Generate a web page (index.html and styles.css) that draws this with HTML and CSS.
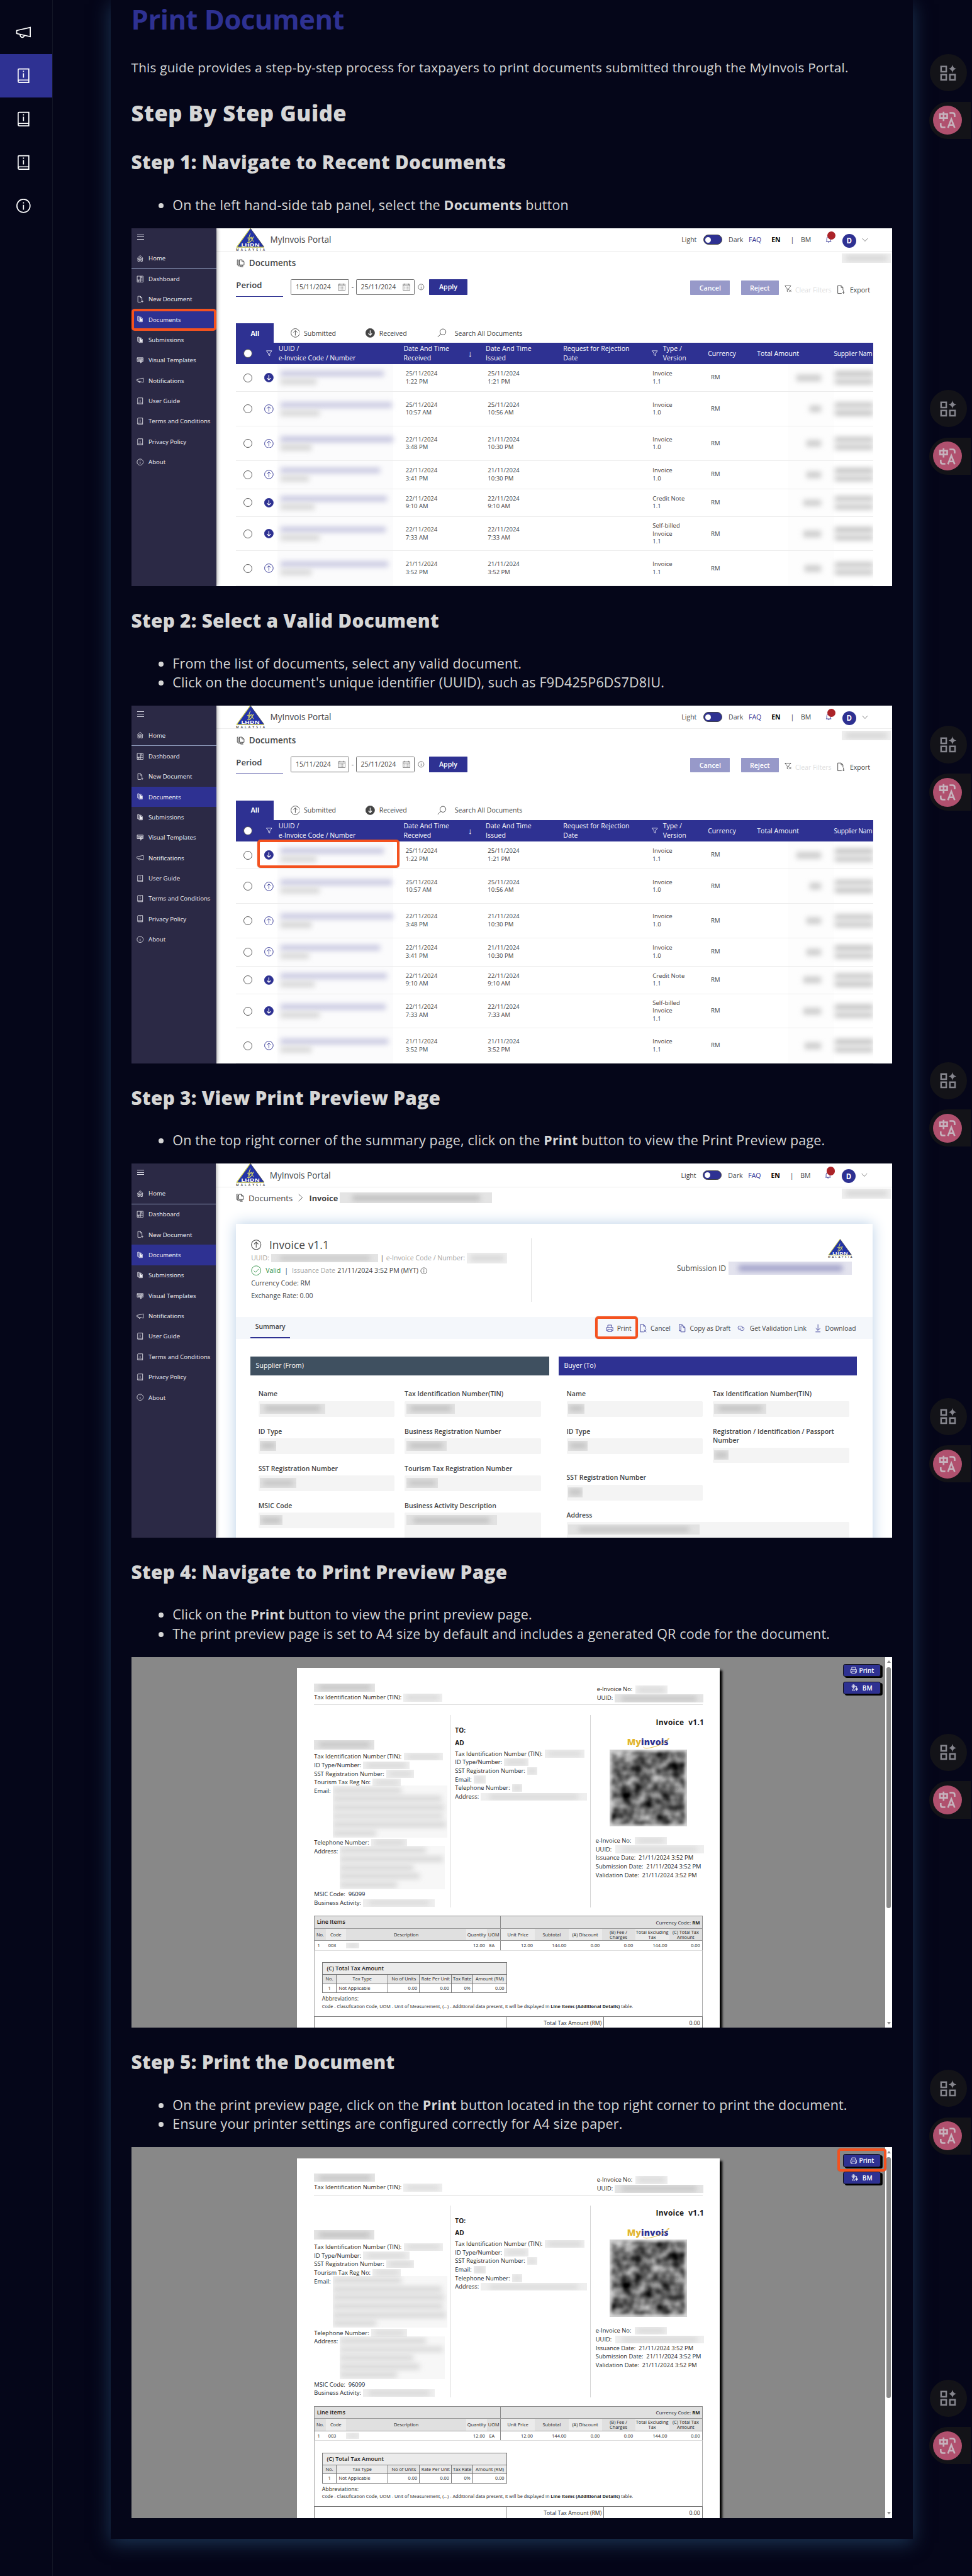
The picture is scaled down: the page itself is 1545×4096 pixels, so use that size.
FILE: index.html
```html
<!DOCTYPE html>
<html lang="en">
<head>
<meta charset="utf-8">
<title>Print Document</title>
<link rel="stylesheet" href="styles.css">
</head>
<body>
<svg width="0" height="0" class="defs" aria-hidden="true">
  <symbol id="home" viewBox="0 0 16 16"><path d="M1.5 8 8 1.8 14.500 8M3 7v7.500h3.500V9.500h3v5H13V7M5 11.500V8.500l3-3 3 3v3"/></symbol>
  <symbol id="dash" viewBox="0 0 16 16"><path d="M1.500 1.500h13v13h-13zM8.500 1.500v13M1.500 10h13M8.500 5.500h6M11.500 1.500v4M5 10v4.500"/></symbol>
  <symbol id="newdoc" viewBox="0 0 16 16"><path d="M9.500 14.500H3v-13h5.500l3.500 3.500v5.500M8.500 1.500V5H12M12.500 10.500v5M10 13h5"/></symbol>
  <symbol id="docs" viewBox="0 0 16 16"><path d="M5.500 11.500v-10h5l4 3.500v6.500zM10.500 1.500V5h4M5.500 3.500h-2v10h8.500v-2M3.500 1.500h-2v10h2M8 13.500v1.500h5"/></symbol>
  <symbol id="docsfill" viewBox="0 0 16 16"><path d="M5.500 3v-1.500H2.500V11H5M5.500 3h4.500l3 3v7.500h-7.500z"/><path d="M7.500 4.500H9.500v2.500H12v5H7.500z" fill="currentColor"/></symbol>
  <symbol id="tmpl" viewBox="0 0 16 16"><path d="M1.500 2.500h13v8h-13zM1.500 4.500h13M4 6.500h3v2.500H4zM9 6.500h2v2.500H9zM10 6c2-2 4 0 3 2l-2 5-2 1 0-2z"/></symbol>
  <symbol id="mega" viewBox="0 0 16 16"><path d="M1 6.200 15 3v9.500L1 9.300zM4.500 10.200c0 3.800 4.300 3.800 4.300 1"/></symbol>
  <symbol id="book" viewBox="0 0 16 16"><path d="M2.500 14V2q0-1 1-1h10v14h-10q-1 0-1-1t1-1.500h10M8 5.500v4.500M8 3v1.200"/></symbol>
  <symbol id="info" viewBox="0 0 16 16"><circle cx="8" cy="8" r="6.800"/><path d="M8 7v5M8 4.200v1.300"/></symbol>
  <symbol id="up" viewBox="0 0 18 18"><circle cx="9" cy="9" r="8.300"/><path d="M9 14V4.500M5.300 8 9 4.300 12.700 8"/></symbol>
  <symbol id="down" viewBox="0 0 18 18"><circle cx="9" cy="9" r="8.500" fill="currentColor"/><path d="M9 4v9.500M5.500 10 9 13.500l3.500-3.500" stroke="#fff" stroke-width="1.500"/></symbol>
  <symbol id="filter" viewBox="0 0 16 16"><path d="M2 2.500h12L9.500 8.500v5l-3-2v-3z"/></symbol>
  <symbol id="filterx" viewBox="0 0 16 16"><path d="M1 1.500h13L9 8v2.500M6 14V8L1 1.500M6 14l2-1M10 10l5 5M15 10l-5 5"/></symbol>
  <symbol id="cal" viewBox="0 0 16 16"><path d="M1 2.500h14v12.500H1zM1 5.500h14M4 1v3M12 1v3"/><path d="M3.500 8h9M3.500 10.300h9M3.500 12.700h9" stroke-dasharray="1.500 1.200"/></symbol>
  <symbol id="search" viewBox="0 0 18 18"><circle cx="11" cy="7" r="5.700"/><path d="M7 11 1 17"/></symbol>
  <symbol id="export" viewBox="0 0 16 18"><path d="M9.500 16.500H2v-15h6.500L12 5v5M8.500 1.500V5H12M13 10.500v6M11 14.500l2 2 2-2"/></symbol>
  <symbol id="bell" viewBox="0 0 16 16"><path d="M2.500 12.500h11M4 12.500V7q0-4.500 4-4.500T12 7v5.500M6.500 12.500q1.500 4 3 0"/></symbol>
  <symbol id="chev" viewBox="0 0 12 8"><path d="M.8 1.200 6 6.800l5.200-5.600"/></symbol>
  <symbol id="chevr" viewBox="0 0 10 18"><path d="M1 1.500 9 9l-8 7.500"/></symbol>
  <symbol id="printer" viewBox="0 0 16 16"><path d="M4 6.500v-5h8v5M3.500 13h-2V6.500h13V13h-2M4 10h8v5H4z"/></symbol>
  <symbol id="cancel" viewBox="0 0 14 18"><path d="M8.500 16.500h-7v-15H8L11.500 5v6M8 1.500V5h3.500M9 12l4.500 5M13.500 12 9 17"/></symbol>
  <symbol id="copy" viewBox="0 0 14 18"><path d="M4.500 4h5L13 7.500v9H4.500zM9.500 4v3.500H13M4.500 14h-3.500V1.500h6L9 4"/></symbol>
  <symbol id="link" viewBox="0 0 18 14"><path d="M7.500 10H5.500a4 4 0 1 1 0-8h2.500a4 4 0 0 1 3.300 6M10.500 4.500h2a3.800 3.800 0 0 1 0 7.500h-2.500a3.800 3.800 0 0 1-3.500-5.500"/></symbol>
  <symbol id="dl" viewBox="0 0 12 18"><path d="M6 1v12M1.500 9 6 13.500 10.500 9M1 16.500h10"/></symbol>
  <symbol id="check" viewBox="0 0 20 20"><circle cx="10" cy="10" r="9"/><path d="m5.500 10.300 3.200 3.200 6-6.500"/></symbol>
  <symbol id="lang" viewBox="0 0 16 16"><circle cx="5" cy="4.500" r="3.500"/><path d="M1.500 4.500h7M5 1v7M2 15l3-6 3 6M3 13h4M9 9h6M9 12h6M12 7.500v7.500M9 5h3v3"/></symbol>
  <symbol id="lhdn" viewBox="0 0 56 44"><path d="M28 0 54.500 36.500H1.500z" fill="#2333a8"/><path d="M28 0 1.500 36.500H54" fill="none" stroke="#e3e34a" stroke-width="1.300"/><path d="M28 10q-4 8-3 16 1-7 5-9 4 1-1 8-4 4-7 2M22 19q8-3 12 7M34 16q-2 8-10 12" fill="none" stroke="#dede63" stroke-width="1.300"/><text x="28" y="35" text-anchor="middle" textLength="36" lengthAdjust="spacingAndGlyphs" font-size="8.500" font-weight="700" fill="#fff">LHDN</text><text x="28" y="43.500" text-anchor="middle" textLength="56" font-size="6" font-weight="600" fill="#333">MALAYSIA</text></symbol>
</svg>
<div class="page">
  <nav class="rail">
    <a class="rail-item"><svg class="ic"><use href="#mega"/></svg></a>
    <a class="rail-item active"><svg class="ic"><use href="#book"/></svg></a>
    <a class="rail-item"><svg class="ic"><use href="#book"/></svg></a>
    <a class="rail-item"><svg class="ic"><use href="#book"/></svg></a>
    <a class="rail-item"><svg class="ic"><use href="#info"/></svg></a>
  </nav>
  <main class="card">
    <h1>Print Document</h1>
    <p class="intro">This guide provides a step-by-step process for taxpayers to print documents submitted through the MyInvois Portal.</p>
    <h2>Step By Step Guide</h2>
    <section>
      <h3>Step 1: Navigate to Recent Documents</h3>
      <ul><li>On the left hand-side tab panel, select the <b>Documents</b> button</li></ul>
      <figure class="shot shot-list" data-mark="menu"></figure>
    </section>
    <section>
      <h3>Step 2: Select a Valid Document</h3>
      <ul><li>From the list of documents, select any valid document.</li><li>Click on the document's unique identifier (UUID), such as F9D425P6DS7D8IU.</li></ul>
      <figure class="shot shot-list" data-mark="row"></figure>
    </section>
    <section>
      <h3>Step 3: View Print Preview Page</h3>
      <ul><li>On the top right corner of the summary page, click on the <b>Print</b> button to view the Print Preview page.</li></ul>
      <figure class="shot shot-detail"></figure>
    </section>
    <section>
      <h3>Step 4: Navigate to Print Preview Page</h3>
      <ul><li>Click on the <b>Print</b> button to view the print preview page.</li><li>The print preview page is set to A4 size by default and includes a generated QR code for the document.</li></ul>
      <figure class="shot shot-print"></figure>
    </section>
    <section>
      <h3>Step 5: Print the Document</h3>
      <ul><li>On the print preview page, click on the <b>Print</b> button located in the top right corner to print the document.</li><li>Ensure your printer settings are configured correctly for A4 size paper.</li></ul>
      <figure class="shot shot-print" data-mark="print"></figure>
    </section>
  </main>
  <aside class="tools"></aside>
</div>
<script src="script.js"></script>
</body>
</html>
```
FILE: styles.css
```css
* { box-sizing: border-box; }
html, body { margin: 0; background: #050619; }
body { height: 4096px; overflow: hidden; font-family: "Open Sans", "Noto Sans", sans-serif; }
.defs { display: none; }
svg { fill: none; stroke: currentColor; stroke-width: 1.1; flex: none; display: block; }
svg text { stroke: none; font-family: "Open Sans", sans-serif; }
symbol { overflow: visible; }
.logo { overflow: visible; }
.page { zoom: 0.82137; width: 1881px; height: 4987px; display: flex; align-items: flex-start; overflow: hidden; color: #d6d6d6; }

.rail { width: 102px; height: 4987px; padding-top: 21px; border-right: 1px solid #131626; flex: none; position: relative; z-index: 1; }
.rail-item { display: flex; align-items: center; height: 84px; padding-left: 31px; color: #fff; }
.rail-item .ic { width: 30px; height: 30px; }
.rail-item.active { background: #2e3192; }

.card { width: 1553px; height: 4915px; margin-left: 112px; padding: 3px 40px 0; flex: none; background: #050619; box-shadow: 0 8px 34px #1c3655; }
h1 { margin: 0; font-size: 53px; line-height: 70px; font-weight: 700; color: #2e3192; letter-spacing: -.6px; }
.intro { margin: 40px 0 43.100px; font-size: 25.200px; letter-spacing: .27px; line-height: 36px; white-space: nowrap; }
h2 { margin: 0 0 1.500px; font-size: 42px; letter-spacing: .65px; line-height: 54px; font-weight: 800; }
h3 { margin: 0; padding-top: 42.500px; font-size: 36.200px; letter-spacing: .35px; line-height: 48px; font-weight: 800; white-space: nowrap; }
ul { margin: 40.600px 0 25.900px; padding: 0 0 0 80px; font-size: 26.200px; letter-spacing: .2px; line-height: 37px; white-space: nowrap; }
figure { margin: 0; }

.tools { margin-left: 30px; padding-top: 105px; flex: none; width: 84px; }
.tool-set { height: 650.300px; padding-left: 1px; }
.tool-set:nth-child(7) { height: 600px; }
.tool-a { width: 72px; height: 72px; margin-left: 1px; border-radius: 50%; background: #131318; color: #85858d; display: grid; place-items: center; }
.tool-b { width: 81px; height: 72px; margin-top: 20px; border-radius: 36px 0 0 36px; background: #131318; padding: 8px 0 0 8px; }
.tool-b span { width: 56px; height: 56px; border-radius: 50%; background: #b0506e; color: #c6b3bd; display: grid; place-items: center; }

/* embedded portal screens */
.shot { position: relative; width: 1473px; height: 693px; overflow: hidden; background: #fff; color: #444; font-size: 12px; display: flex; white-space: nowrap; }
.shot-detail { height: 724px; }
.shot-print { height: 718px; background: #888; }
.mark { position: absolute; border: 5px solid #f4521f; border-radius: 6px; box-shadow: 0 0 1px #555; z-index: 4; }
.mark.menu { left: 0; top: 156px; width: 165px; height: 43px; }
.mark.row { left: 244px; top: 260px; width: 275px; height: 55px; }
.mark.act { left: 898px; top: 296px; width: 83px; height: 43px; }
.mark.print { left: 1367px; top: 2px; width: 94px; height: 46px; }

.side { width: 165px; background: #2b2945; color: #f4f4f8; flex: none; box-shadow: 1px 0 7px #0006; z-index: 1; font-size: 11.700px; }
.shot-detail .side { width: 164px; }
.burger { height: 38.600px; padding: 12px 0 0 11px; }
.burger i { display: block; width: 14px; height: 1px; margin-bottom: 3.500px; background: #dcdce6; }
.side a { display: flex; align-items: center; height: 39.400px; padding-left: 10.500px; gap: 9px; }
.side a svg { width: 14px; height: 14px; }
.side a:nth-of-type(1) { height: 40px; border-bottom: 1.500px solid #8f9cbc; }
.side a.on { background: #2e3192; }
.main { flex: 1; min-width: 0; display: flex; flex-direction: column; }
.top { height: 46px; border-bottom: 1px solid #ececec; display: grid; align-items: center; flex: none;
  grid-template-columns: 38px 66px 796px 42px 49px 39px 44px 37px 20px 46px 34px 38px 1fr; font-size: 12.800px; }
.logo { width: 56px; height: 44px; }
.brand { font-size: 16.500px; }
.toggle { width: 37px; height: 19px; border-radius: 10px; background: #2e3192; border: 1px solid #444; padding: 3px; }
.toggle i { display: block; width: 11px; height: 11px; border-radius: 50%; background: #fff; }
.blue { color: #2e3192; }
.en { color: #000; font-weight: 700; }
.bell { position: relative; color: #2e3192; }
.bell svg { width: 15px; height: 16px; }
.bell i { position: absolute; left: 5px; top: -8px; width: 16px; height: 16px; border-radius: 50%; background: #ab2328; }
.ava { width: 27px; height: 27px; border-radius: 50%; background: #2e3192; color: #fff; font-weight: 700; font-size: 14px; display: grid; place-items: center; margin-top: 4px; }
.account { position: absolute; right: 3px; top: 48px; }

.crumb { height: 43px; padding-left: 39px; display: flex; align-items: center; gap: 8px; font-size: 16.400px; font-weight: 600; flex: none; }
.crumb svg { width: 16px; height: 18px; }
.period { height: 50px; padding-left: 38px; display: grid; align-items: center; flex: none;
  grid-template-columns: 106px 113px 13px 113px 28px 75px 431px 77px 21px 73px 11px 21px 80px 26px 1fr; font-size: 12.800px; }
.period .lbl { width: 91px; font-size: 16px; font-weight: 600; height: 38px; line-height: 30px; border-bottom: 2px solid #2e3192; }
.date { height: 30px; border: 1px solid #6d6d6d; border-radius: 2px; display: flex; align-items: center; justify-content: space-between; padding: 0 6px 0 8px; }
.date svg { width: 15px; height: 15px; stroke-width: .8; }
.dash { text-align: center; }
.btn { height: 30px; background: #2e3192; color: #fff; font-weight: 600; font-size: 13px; display: grid; place-items: center; border-radius: 1px; }
.btn.off { height: 28px; background: #9799c9; margin-top: 4px; }
.off-t { color: #dedede; padding-top: 12px; }
.tabs { margin-top: 45.500px; padding-left: 38px; display: grid; grid-template-columns: 73px 32px 26px 120px 26px 112px 34px 1fr; align-items: center; height: 37.500px; flex: none; font-size: 12.900px; }
.tabs svg { width: 18px; height: 18px; }
.tabs .all { height: 100%; background: #2e3192; color: #fff; font-weight: 700; display: grid; place-items: center; }

.tr { margin-left: 38px; width: 1233px; display: grid; align-items: center; overflow: hidden; flex: none;
  grid-template-rows: 100%;
  grid-template-columns: 46px 36px 242px 159px 150px 167px 113px 95px 149px 76px; border-bottom: 1px solid #ececec; line-height: 15.200px; font-size: 11.600px; }
.tr.th { height: 41.500px; background: #2e3192; color: #fff; font-size: 12.900px; line-height: 18px; border: 0; }
.tr > div { min-width: 0; }
.tr > .cover { height: 100%; }
.radio { width: 17px; height: 17px; border: 1px solid #555; border-radius: 50%; margin-left: 14.500px; background: #fff; }
.tr svg { width: 18px; height: 18px; margin-left: 9px; color: #2e3192; }
.th svg { color: #fff; width: 14px; height: 14px; margin-left: 11px; }
.th .type { display: flex; gap: 9px; align-items: center; margin-left: -8px; }
.th .recv { display: flex; justify-content: space-between; padding-right: 26px; align-items: center; }
.arrow { font-size: 16px; }
.th .sn { font-size: 12.400px; letter-spacing: -.4px; }
.td { padding-left: 4px; }
.ty { padding-left: 6px; }
.hid { background: #fbfbfc; width: 224px; height: 100%; display: flex; flex-direction: column; justify-content: center; gap: 6px; margin-left: -2px; padding-left: 6px; }
.hid i { height: 10px; background: #c3c3de; filter: blur(5px); display: block; }
.hid i + i { background: #d2d2d2; }
.amt { display: flex; justify-content: flex-end; padding-right: 25px; background: #fdfdfd; height: 100%; align-items: center; margin-left: 60px; }
.amt i { height: 12px; background: #c9c9c9; filter: blur(5px); }
.sup i { display: block; width: 74px; height: 10px; margin: 5px 0 5px 2px; background: #c3c3c3; filter: blur(5px); }

.rd { position: relative; display: inline-block; overflow: hidden; background: #e4e4e4; height: 16px; vertical-align: middle; flex: none; }
.rd::after { content: ""; position: absolute; inset: 28% 8%; background: #a8a8a8; filter: blur(5px); opacity: .7; }
.rd.v { background: #e3e3ee; }
.rd.v::after { background: #7d7db5; }
.rd.l { background: #efefef; }
.rd.l::after { background: #c4c4c4; }

/* invoice detail */
.shot-detail .crumb { font-weight: 400; height: 41px; font-size: 16px; }
.shot-detail .crumb b { font-weight: 700; font-size: 15.500px; margin-left: 4px; margin-right: -4px; }
.shot-detail .crumb svg.cr { width: 9px; margin-left: 3px; }
.inv { margin: 30px 0 0 38px; width: 1233px; height: 640px; background: #fff; box-shadow: 0 0 26px #b9cfe6; flex: none; }
.inv-head { height: 180.500px; display: flex; padding: 28px 40px 0 30px; }
.inv-l { width: 543px; height: 123px; border-right: 1px solid #e2e2e2; font-size: 12.900px; display: flex; flex-direction: column; }
.inv-l div { display: flex; align-items: center; height: 24.500px; gap: 4px; }
.inv-l .ttl { height: 26px; font-size: 21px; gap: 15px; padding-bottom: 2px; letter-spacing: .1px; }
.inv-l .ttl svg, .inv-l .ok { width: 20px; height: 20px; }
.inv-l .ok { color: #34934a; margin-right: 4px; }
.inv-l .grn { color: #2c8c40; }
.inv-l .nf { width: 14px; height: 14px; }
.gray { color: #a3a3a3; }
.inv-r { flex: 1; display: flex; flex-direction: column; align-items: flex-end; }
.inv-r .logo { width: 47px; height: 38px; margin-top: 1px; }
.inv-r div { display: flex; gap: 5px; align-items: center; margin-top: 6px; font-size: 14.300px; }
.bar { height: 42px; background: #f4f7fb; display: grid; align-items: center; padding-left: 29px; font-size: 12.600px;
  grid-template-columns: 687px 22px 43px 22px 54px 22px 92px 24px 125px 21px 1fr; }
.bar svg { width: 15px; height: 17px; color: #2e3192; }
.bar .sum { width: 76px; height: 40px; line-height: 36px; padding-left: 9px; font-weight: 600; border-bottom: 3px solid #2e3192; }
.cols { display: grid; grid-template-columns: 578px 577px; gap: 18.500px; padding: 34px 0 0 29px; }
.phead { height: 37px; background: #3f5060; color: #fff; padding-left: 10px; line-height: 36px; font-size: 13px; }
.buy .phead { background: #2e3192; }
.fields { display: grid; grid-template-columns: 264px 264px; column-gap: 19px; padding: 27px 0 0 15px; }
.fld { min-height: 72px; font-size: 12.800px; font-weight: 600; line-height: 18px; }
.fld.wide { grid-column: span 2; }
.fld.two { min-height: 90px; }
.fld p { margin: 4.500px 0 0; height: 30px; background: #f4f4f4; border-radius: 2px; padding: 5px 3px; line-height: 0; }
.fld.big p, .fld.wide p { height: 70px; }
.fld .rd { background: #e2e2e2; height: 19px; }

/* print preview */
.paper { margin-left: 320.500px; margin-top: 21.500px; width: 818.500px; height: 720px; background: #fff; box-shadow: 5px 5px 4px #000; padding: 30px 33.500px 0; color: #1c1c1c; font-size: 11.400px; flex: none; }
.ph { height: 42px; border-bottom: 1.500px solid #dcdcdc; display: grid; grid-template-columns: 547px 1fr; line-height: 16.600px; }
.ph .rd { height: 16px; }
.p3 { display: grid; grid-template-columns: 262.500px 272px 1fr; margin-top: 19.500px; height: 371px; line-height: 16.600px; }
.p3 > div + div { border-left: 1.500px solid #d5d5d5; padding-left: 9px; }
.ln { height: 16.650px; display: flex; align-items: center; gap: 4px; }
.ln .rd { height: 15px; background: #eeeeee; }
.ln .rd::after { background: #c4c4c4; }
.blk { align-items: flex-start; }
.blk .many { display: flex; flex-direction: column; gap: 7px; background: #f7f7f7; padding-top: 4px; margin-top: -2px; overflow: hidden; }
.many i { display: block; height: 9.600px; background: #d3d3d3; filter: blur(5px); flex: none; }
.to { font-weight: 700; font-size: 12.300px; }
.vt { text-align: right; font-weight: 700; font-size: 14.500px; height: 27px; line-height: 27px; letter-spacing: .4px; }
.mylogo { font-weight: 800; font-size: 17px; line-height: 22px; height: 25px; margin: 14.500px 0 0 61px; color: #2e3192; letter-spacing: .1px; position: relative; }
.mylogo b { color: #e2b52c; font-weight: 800; }
.mylogo svg { position: absolute; left: 30px; top: 2px; width: 54px; height: 24px; color: #e2b52c; }
.qr { width: 150px; height: 149px; margin: 0 0 19px 27px; overflow: hidden; }
.li { margin-top: 17.500px; width: 752px; border: 1.500px solid #8c8c8c; border-bottom: 1px solid #ddd; font-size: 9px; }
.li .r1 { display: grid; grid-template-columns: 360px 1fr; height: 23.500px; background: #e0e0e0; align-items: center; border-bottom: 1.500px solid #999; }
.li .r1 b { font-size: 11px; padding-left: 4px; font-weight: 600; line-height: 22px; border-right: 1px solid #888; }
.li .r1 span { text-align: right; padding-right: 4px; font-size: 9.500px; }
.g { display: grid; grid-template-columns: 21px 39.600px 232.600px 40.200px 27px 65.600px 65px 64.600px 64.400px 66px 1fr; text-align: center; line-height: 10px; }
.g > * { display: grid; place-items: center; background: #e0e0e0; }
.g > :nth-child(even) { background: #ebebeb; }
.g > :nth-child(5) { border-right: 1px solid #888; }
.g.h { height: 24px; border-bottom: 1.500px solid #999; }
.g.d { height: 17.500px; }
.g.d > * { background: #fff; justify-content: end; padding: 0 4px 0 0; }
.g.d > :nth-child(-n+3) { justify-content: start; padding-left: 5px; }
.g.d > :nth-child(3) { padding-left: 0; }
.g.d > :nth-child(5) { justify-content: start; padding-left: 4px; }
.g .rd { height: 12px; }
.sub { width: 752px; height: 126.500px; border: solid #aaa; border-width: 0 1.500px; padding: 22.500px 0 0 14px; font-size: 9px; }
.tax { width: 358px; border: 1px solid #777; }
.tax b { display: block; height: 22px; line-height: 22px; padding-left: 8px; background: #ebebeb; font-size: 11px; font-weight: 600; }
.tg { display: grid; grid-template-columns: 26px 100px 61px 62px 41px 1fr; text-align: center; line-height: 16.500px; border-top: 1px solid #777; }
.tg > * { background: #e4e4e4; }
.tg > :nth-child(even) { background: #ebebeb; }
.tg > * + * { border-left: 1px solid #777; }
.tg.d > * { background: #fff; text-align: right; padding-right: 4px; }
.tg.d > :first-child { text-align: center; padding: 0; }
.tg.d > :nth-child(2) { text-align: left; padding-left: 4px; }
.ab { font-size: 10.600px; line-height: 15px; margin-top: 3.500px; }
.ab2 { line-height: 14px; font-size: 8.900px; }
.tot { width: 752px; height: 40px; border: 1.200px solid #777; display: grid; grid-template-columns: 370px 189px 1fr; font-size: 10.600px; line-height: 25px; text-align: right; }
.tot > * { padding-right: 4px; }
.tot > * + * { border-left: 1px solid #777; }
.pbtns { margin: 13.500px 9px 0 auto; display: flex; flex-direction: column; gap: 9px; }
.pbtn { width: 72px; height: 25px; border-radius: 4px; background: #2e3192; border: 1px solid #111; box-shadow: 3.500px 2.500px 0 #000; color: #fff; font-weight: 600; font-size: 12.200px; display: flex; align-items: center; justify-content: center; gap: 4px; }
.pbtn svg { width: 14px; height: 14px; }
.scroll { width: 14px; background: #fff; display: flex; flex-direction: column; align-items: center; padding: 7px 0; color: #8a8a8a; }
.scroll::before { content: ""; border: 4px solid transparent; border-top: 0; border-bottom: 6px solid #8a8a8a; }
.scroll i { width: 8px; height: 466px; border-radius: 4px; background: #8a8a8a; margin: 8px 0 auto; }
.scroll::after { content: ""; border: 4px solid transparent; border-bottom: 0; border-top: 6px solid #8a8a8a; }
```
FILE: script.js
```javascript
const ic = (n, c = '') => `<svg class="${c}"><use href="#${n}"/></svg>`;
const rd = (w, c = '', h = 0) => `<i class="rd ${c}" style="width:${w}px${h ? `;height:${h}px` : ''}"></i>`;
const all = (sel, html) => document.querySelectorAll(sel).forEach(el => { el.innerHTML = typeof html === 'function' ? html(el) : html; });

const menu = [['home', 'Home'], ['dash', 'Dashboard'], ['newdoc', 'New Document'], ['docsfill', 'Documents'], ['docsfill', 'Submissions'], ['tmpl', 'Visual Templates'], ['mega', 'Notifications'], ['book', 'User Guide'], ['book', 'Terms and Conditions'], ['book', 'Privacy Policy'], ['info', 'About']];
const side = `<div class="side"><div class="burger"><i></i><i></i><i></i></div>${menu.map(([i, t]) => `<a class="${t === 'Documents' ? 'on' : ''}">${ic(i)}<span>${t}</span></a>`).join('')}</div>`;
const top_ = `<div class="top"><span></span>${ic('lhdn', 'logo')}<span class="brand">MyInvois Portal</span><span>Light</span><span class="toggle"><i></i></span><span>Dark</span><span class="blue">FAQ</span><span class="en">EN</span><span>|</span><span>BM</span><span class="bell">${ic('bell')}<i></i></span><span class="ava">D</span><svg style="width:12px;height:8px;color:#777"><use href="#chev"/></svg></div><div class="account">${rd(95, 'l', 19)}</div>`;

const docs = [
  [54, 'down', 200, 70, '25/11/2024', '1:22 PM', '25/11/2024', '1:21 PM', 'Invoice<br>1.1', 48],
  [67, 'up', 216, 75, '25/11/2024', '10:57 AM', '25/11/2024', '10:56 AM', 'Invoice<br>1.0', 22],
  [66, 'up', 218, 60, '22/11/2024', '3:48 PM', '21/11/2024', '10:30 PM', 'Invoice<br>1.0', 28],
  [55, 'up', 192, 55, '22/11/2024', '3:41 PM', '21/11/2024', '10:30 PM', 'Invoice<br>1.0', 28],
  [54, 'down', 206, 66, '22/11/2024', '9:10 AM', '22/11/2024', '9:10 AM', 'Credit Note<br>1.1', 34],
  [66, 'down', 204, 75, '22/11/2024', '7:33 AM', '22/11/2024', '7:33 AM', 'Self-billed<br>Invoice<br>1.1', 34],
  [68, 'up', 208, 60, '21/11/2024', '3:52 PM', '21/11/2024', '3:52 PM', 'Invoice<br>1.1', 32]
];
const rows = docs.map(([h, i, w1, w2, a, b, c, d, t, w]) => `<div class="tr" style="height:${h}px"><div><div class="radio"></div></div><div>${ic(i)}</div><div class="cover"><div class="hid"><i style="width:${w1}px"></i><i style="width:${w2}px"></i></div></div><div class="td">${a}<br>${b}</div><div class="td">${c}<br>${d}</div><div></div><div class="ty">${t}</div><div class="ty">RM</div><div class="cover"><div class="amt"><i style="width:${w}px"></i></div></div><div class="sup"><i></i><i></i></div></div>`).join('');

all('.shot-list', el => `${side}<div class="main">${top_}
<div class="crumb">${ic('docs')}<span>Documents</span></div>
<div class="period"><span class="lbl">Period</span><span class="date">15/11/2024${ic('cal')}</span><span class="dash">-</span><span class="date">25/11/2024${ic('cal')}</span><svg style="width:13px;height:13px;margin-left:7px"><use href="#info"/></svg><span class="btn">Apply</span><span></span><span class="btn off">Cancel</span><span></span><span class="btn off">Reject</span><span></span><svg style="width:14px;height:15px;margin-top:8px"><use href="#filterx"/></svg><span class="off-t">Clear Filters</span><svg style="width:16px;height:18px;margin-top:10px"><use href="#export"/></svg><span style="padding-top:12px">Export</span></div>
<div class="tabs"><span class="all">All</span><span></span>${ic('up')}<span>Submitted</span>${ic('down')}<span>Received</span>${ic('search')}<span>Search All Documents</span></div>
<div class="tr th"><div><div class="radio"></div></div><div>${ic('filter')}</div><div>UUID /<br>e-Invoice Code / Number</div><div class="recv"><span>Date And Time<br>Received</span><span class="arrow">↓</span></div><div>Date And Time<br>Issued</div><div>Request for Rejection<br>Date</div><div class="type">${ic('filter')}<span>Type /<br>Version</span></div><div>Currency</div><div>Total Amount</div><div class="sn">Supplier Nam</div></div>
${rows}</div><div class="mark ${el.dataset.mark}"></div>`);

const fld = (l, w, c = '') => `<div class="fld ${c}">${l}<p>${rd(w)}</p></div>`;
all('.shot-detail', `${side}<div class="main">${top_}
<div class="crumb">${ic('docs')}<span>Documents</span>${ic('chevr', 'cr')}<b>Invoice</b>${rd(294, '', 21)}</div>
<div class="inv"><div class="inv-head"><div class="inv-l"><div class="ttl">${ic('up')}Invoice v1.1</div><div><span class="gray">UUID:</span>${rd(207)}|<span class="gray">e-Invoice Code / Number:</span>${rd(78, 'l', 20)}</div><div>${ic('check', 'ok')}<span class="grn">Valid</span>&nbsp;|&nbsp;<span class="gray">Issuance Date</span><span>21/11/2024 3:52 PM (MYT)</span>${ic('info', 'nf')}</div><div>Currency Code: RM</div><div>Exchange Rate: 0.00</div></div>
<div class="inv-r">${ic('lhdn', 'logo')}<div>Submission ID ${rd(239, 'v', 25)}</div></div></div>
<div class="bar"><span class="sum">Summary</span>${ic('printer')}<span>Print</span>${ic('cancel')}<span>Cancel</span>${ic('copy')}<span>Copy as Draft</span>${ic('link')}<span>Get Validation Link</span>${ic('dl')}<span>Download</span></div>
<div class="cols"><div><div class="phead">Supplier (From)</div><div class="fields">${fld('Name', 127)}${fld('Tax Identification Number(TIN)', 94)}${fld('ID Type', 32)}${fld('Business Registration Number', 78)}${fld('SST Registration Number', 70)}${fld('Tourism Tax Registration Number', 62)}${fld('MSIC Code', 44)}${fld('Business Activity Description', 176, 'big')}</div></div>
<div class="buy"><div class="phead">Buyer (To)</div><div class="fields">${fld('Name', 32)}${fld('Tax Identification Number(TIN)', 100)}${fld('ID Type', 38)}${fld('Registration / Identification / Passport<br>Number', 27, 'two')}${fld('SST Registration Number', 28)}<div class="fld"></div>${fld('Address', 254, 'wide')}</div></div></div></div></div><div class="mark act"></div>`);

const ln = (l, w) => `<div class="ln">${l} ${w ? rd(w) : ''}</div>`;
const many = (l, w, lines) => `<div class="ln blk" style="height:${lines.length * 16.65}px">${l}<span class="many" style="width:${w}px;height:${lines.length * 16.65}px">${lines.map(x => `<i style="width:${x}%"></i>`).join('')}</span></div>`;
const cells = a => a.map(x => `<span>${x}</span>`).join('');
all('.shot-print', el => `<div class="paper">
<div class="ph"><div><div style="height:18px;line-height:15px">${rd(118)}</div>Tax Identification Number (TIN): ${rd(76, 'l')}</div><div style="padding-top:3px">e-Invoice No: &nbsp;${rd(62, 'l')}<br>UUID: ${rd(172)}</div></div>
<div class="p3"><div><div style="height:72px;padding-top:48px;line-height:18px">${rd(117, '', 18)}</div>
${ln('Tax Identification Number (TIN):', 76)}${ln('ID Type/Number:', 90)}${ln('SST Registration Number:', 54)}${ln('Tourism Tax Reg No:', 55)}${many('Email:', 222, [60, 95, 97, 96, 99, 38])}${ln('Telephone Number:', 70)}${many('Address:', 203, [82, 98, 70, 76, 54])}${ln('MSIC Code: &nbsp;96099', 0)}${ln('Business Activity:', 139)}</div>
<div><div class="to" style="margin-top:22px">TO:</div><div class="to" style="margin:7px 0 4px">AD</div>${ln('Tax Identification Number (TIN):', 77)}${ln('ID Type/Number:', 47)}${ln('SST Registration Number:', 19)}${ln('Email:', 23)}${ln('Telephone Number:', 20)}${ln('Address:', 205)}</div>
<div><div class="vt">Invoice &nbsp;v1.1</div><div class="mylogo"><b>My</b>invois<svg viewBox="0 0 54 24"><path d="M2 18q2 5 20 0t30-16q-2-1-5 2"/></svg></div>
<svg class="qr" viewBox="0 0 150 149"><filter id="noise" x="0" y="0" width="1" height="1" color-interpolation-filters="sRGB"><feTurbulence type="fractalNoise" baseFrequency=".042" numOctaves="2" seed="8"/><feColorMatrix values="1.200 0 0 0 -.19 1.200 0 0 0 -.19 1.200 0 0 0 -.19 0 0 0 0 1"/></filter><filter id="soft" x="-.2" y="-.2" width="1.400" height="1.400"><feGaussianBlur stdDeviation="3"/></filter><rect width="150" height="149" stroke="none" filter="url(#noise)"/><rect width="150" height="149" stroke="#ddd" stroke-width="8" filter="url(#soft)"/></svg>
${ln('e-Invoice No:&nbsp;', 62)}${ln('UUID:&nbsp;', 172)}${ln('Issuance Date: &nbsp;21/11/2024 3:52 PM', 0)}${ln('Submission Date: &nbsp;21/11/2024 3:52 PM', 0)}${ln('Validation Date: &nbsp;21/11/2024 3:52 PM', 0)}</div></div>
<div class="li"><div class="r1"><b>Line Items</b><span>Currency Code: <strong>RM</strong></span></div>
<div class="g h">${cells(['No.', 'Code', 'Description', 'Quantity', 'UOM', 'Unit Price', 'Subtotal', '(A) Discount', '(B) Fee /<br>Charges', 'Total Excluding<br>Tax', '(C) Total Tax<br>Amount'])}</div>
<div class="g d">${cells(['1', '003', rd(26, 'l'), '12.00', 'EA', '12.00', '144.00', '0.00', '0.00', '144.00', '0.00'])}</div></div>
<div class="sub"><div class="tax"><b>(C) Total Tax Amount</b><div class="tg">${cells(['No.', 'Tax Type', 'No of Units', 'Rate Per Unit', 'Tax Rate', 'Amount (RM)'])}</div><div class="tg d">${cells(['1', 'Not Applicable', '0.00', '0.00', '0%', '0.00'])}</div></div>
<div class="ab">Abbreviations:</div><div class="ab2">Code - Classification Code, UOM - Unit of Measurement, (...) - Additional data present, it will be displayed in <strong>Line Items (Additional Details)</strong> table.</div></div>
<div class="tot">${cells(['', 'Total Tax Amount (RM)', '0.00'])}</div></div>
<div class="pbtns"><span class="pbtn">${ic('printer')}Print</span><span class="pbtn">${ic('lang')}&nbsp;BM</span></div><div class="scroll"><i></i></div>${el.dataset.mark ? '<div class="mark print"></div>' : ''}`);

const toolSet = `<div class="tool-set"><div class="tool-a"><svg width="34" height="34" viewBox="0 0 34 34"><path d="M3.500 4.500h10v10h-10zM3.500 20.500h10v10h-10zM20.500 20.500h10v10h-10z" style="stroke-width:3"/><path d="M25.500 1q1 7 7.500 8-6.500 1-7.500 8-1-7-7.500-8 6.500-1 7.500-8z" fill="currentColor" stroke="none"/></svg></div><div class="tool-b"><span><svg width="34" height="34" viewBox="0 0 34 34"><path style="stroke-width:3.2" d="M2.500 5.500h14v7.500h-14zM9.500 1v18M21 3h6q4 0 4 4v4M4 23v4q0 4 4 4h5M18 32l6.500-17L31 32M20.500 26.500h8.500"/></svg></span></div></div>`;
all('.tools', toolSet.repeat(8));
```
